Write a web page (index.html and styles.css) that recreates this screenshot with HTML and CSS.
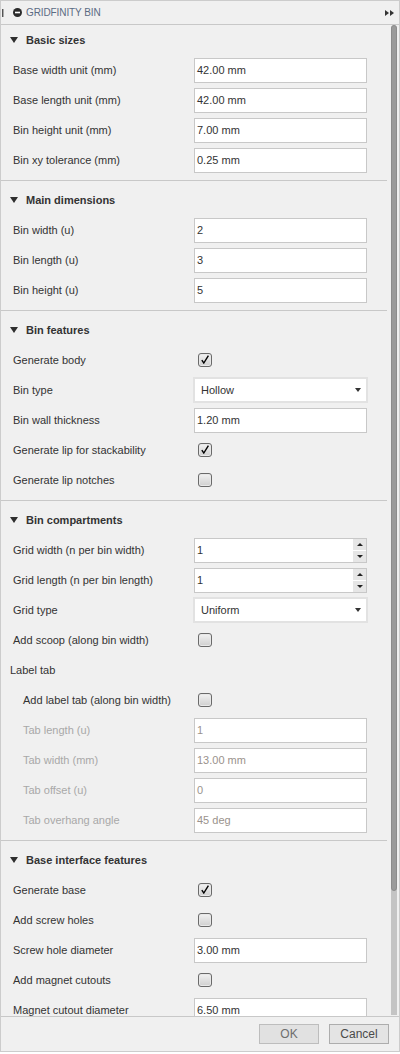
FILE: index.html
```html
<!DOCTYPE html>
<html lang="en">
<head>
<meta charset="utf-8">
<title>Gridfinity Bin</title>
<link rel="stylesheet" href="styles.css">
</head>
<body>
<div class="window">
  <div class="titlebar">
    <span class="grip"></span>
    <svg class="tb-icon" width="9" height="9" viewBox="0 0 9 9"><circle cx="4.5" cy="4.5" r="4.5" fill="#2b2b2b"/><rect x="2" y="3.7" width="5" height="1.6" fill="#fff"/></svg>
    <span class="tb-title">GRIDFINITY BIN</span>
    <svg class="tb-arrows" width="9" height="6" viewBox="0 0 9 6"><polygon points="0,0 4,3 0,6" fill="#333"/><polygon points="5,0 9,3 5,6" fill="#333"/></svg>
  </div>
  <div class="main">
    <div class="content">
      <section class="group first">
        <div class="ghead"><span class="tri"></span>Basic sizes</div>
        <div class="row"><span class="lbl">Base width unit (mm)</span><div class="field">42.00 mm</div></div>
        <div class="row"><span class="lbl">Base length unit (mm)</span><div class="field">42.00 mm</div></div>
        <div class="row"><span class="lbl">Bin height unit (mm)</span><div class="field">7.00 mm</div></div>
        <div class="row"><span class="lbl">Bin xy tolerance (mm)</span><div class="field">0.25 mm</div></div>
      </section>
      <section class="group">
        <div class="ghead"><span class="tri"></span>Main dimensions</div>
        <div class="row"><span class="lbl">Bin width (u)</span><div class="field">2</div></div>
        <div class="row"><span class="lbl">Bin length (u)</span><div class="field">3</div></div>
        <div class="row"><span class="lbl">Bin height (u)</span><div class="field">5</div></div>
      </section>
      <section class="group">
        <div class="ghead"><span class="tri"></span>Bin features</div>
        <div class="row"><span class="lbl">Generate body</span><span class="cb checked"></span></div>
        <div class="row"><span class="lbl">Bin type</span><div class="select">Hollow<span class="caret"></span></div></div>
        <div class="row"><span class="lbl">Bin wall thickness</span><div class="field">1.20 mm</div></div>
        <div class="row"><span class="lbl">Generate lip for stackability</span><span class="cb checked"></span></div>
        <div class="row"><span class="lbl">Generate lip notches</span><span class="cb"></span></div>
      </section>
      <section class="group">
        <div class="ghead"><span class="tri"></span>Bin compartments</div>
        <div class="row"><span class="lbl">Grid width (n per bin width)</span><div class="field spin"><span class="val">1</span><span class="spinbtns"><span class="up"></span><span class="down"></span></span></div></div>
        <div class="row"><span class="lbl">Grid length (n per bin length)</span><div class="field spin"><span class="val">1</span><span class="spinbtns"><span class="up"></span><span class="down"></span></span></div></div>
        <div class="row"><span class="lbl">Grid type</span><div class="select">Uniform<span class="caret"></span></div></div>
        <div class="row"><span class="lbl">Add scoop (along bin width)</span><span class="cb"></span></div>
        <div class="row sub-title"><span class="lbl">Label tab</span></div>
        <div class="row sub"><span class="lbl">Add label tab (along bin width)</span><span class="cb"></span></div>
        <div class="row sub disabled"><span class="lbl">Tab length (u)</span><div class="field">1</div></div>
        <div class="row sub disabled"><span class="lbl">Tab width (mm)</span><div class="field">13.00 mm</div></div>
        <div class="row sub disabled"><span class="lbl">Tab offset (u)</span><div class="field">0</div></div>
        <div class="row sub disabled"><span class="lbl">Tab overhang angle</span><div class="field">45 deg</div></div>
      </section>
      <section class="group">
        <div class="ghead"><span class="tri"></span>Base interface features</div>
        <div class="row"><span class="lbl">Generate base</span><span class="cb checked"></span></div>
        <div class="row"><span class="lbl">Add screw holes</span><span class="cb"></span></div>
        <div class="row"><span class="lbl">Screw hole diameter</span><div class="field">3.00 mm</div></div>
        <div class="row"><span class="lbl">Add magnet cutouts</span><span class="cb"></span></div>
        <div class="row"><span class="lbl">Magnet cutout diameter</span><div class="field">6.50 mm</div></div>
      </section>
    </div>
    <div class="scrollbar"><div class="track"><div class="thumb"></div></div></div>
  </div>
  <div class="footer">
    <button class="btn ok">OK</button>
    <button class="btn cancel">Cancel</button>
  </div>
</div>
</body>
</html>
```
FILE: styles.css
```css
* { box-sizing: border-box; }
html, body { margin: 0; padding: 0; background: #ffffff; }
body {
  font-family: "Liberation Sans", Arial, sans-serif;
  font-size: 11px;
  color: #333333;
}
.window {
  width: 400px;
  height: 1052px;
  border: 1px solid #cccccc;
  background: #f0f0f0;
  display: flex;
  flex-direction: column;
}
.titlebar {
  height: 24px;
  border-bottom: 1px solid #c8c8c8;
  display: flex;
  align-items: center;
  padding-left: 1px;
  flex: none;
}
.grip {
  width: 1px;
  height: 8px;
  background: #555;
  box-shadow: 1px 0 0 #aaa;
  margin-right: 10px;
}
.tb-icon { margin-right: 4px; }
.tb-title {
  font-size: 10px;
  color: #5b6b83;
  letter-spacing: -0.1px;
  flex: 1;
}
.tb-arrows { margin-right: 5px; }
.main {
  flex: 1;
  display: flex;
  min-height: 0;
}
.content {
  width: 386px;
  overflow: hidden;
}
.scrollbar {
  flex: 1;
  padding: 0 2px 1px 4px;
  display: flex;
}
.track {
  width: 6px;
  background: #c4c4c4;
  border-radius: 3px 3px 0 0;
  display: flex;
  flex-direction: column;
}
.thumb {
  height: 866px;
  background: #9b9b9b;
  border: 1px solid #8c8c8c;
  border-radius: 3px;
}
.group {
  padding: 4px 0 5px;
  border-bottom: 1px solid #c8c8c8;
}
.group.first { padding-top: 0; }
.ghead {
  height: 30px;
  display: flex;
  align-items: center;
  padding-left: 9px;
  font-weight: bold;
  color: #333;
}
.tri {
  width: 0;
  height: 0;
  border-left: 4px solid transparent;
  border-right: 4px solid transparent;
  border-top: 6px solid #2e2e2e;
  margin-right: 8px;
}
.row {
  height: 30px;
  display: grid;
  grid-template-columns: 181px 173px;
  align-items: center;
  padding-left: 12px;
}
.row.sub { padding-left: 22px; grid-template-columns: 171px 173px; }
.row.sub-title { padding-left: 9px; }
.lbl { color: #333; white-space: nowrap; }
.disabled .lbl { color: #a8a8a8; }
.field {
  height: 25px;
  background: #fff;
  border: 1px solid #c8c8c8;
  display: flex;
  align-items: center;
  padding-left: 2px;
  color: #333;
}
.disabled .field { color: #9a928c; }
.field.spin { padding-left: 2px; padding-right: 0; }
.field.spin .val { flex: 1; }
.spinbtns {
  width: 13px;
  height: 23px;
  display: flex;
  flex-direction: column;
  gap: 1px;
  background: #fff;
}
.spinbtns span {
  flex: 1;
  background: #e6e6e6;
  display: flex;
  align-items: center;
  justify-content: center;
}
.spinbtns .up::before {
  content: "";
  border-left: 3px solid transparent;
  border-right: 3px solid transparent;
  border-bottom: 3px solid #222;
}
.spinbtns .down::before {
  content: "";
  border-left: 3px solid transparent;
  border-right: 3px solid transparent;
  border-top: 3px solid #222;
}
.select {
  height: 26px;
  margin-left: -1px;
  margin-right: -1px;
  background: #fff;
  border: 2px solid #e2e2e2;
  display: flex;
  align-items: center;
  padding-left: 6px;
  padding-right: 5px;
  color: #333;
}
.caret {
  margin-left: auto;
  border-left: 3.5px solid transparent;
  border-right: 3.5px solid transparent;
  border-top: 4px solid #333;
}
.cb {
  width: 14px;
  height: 14px;
  margin-left: 4px;
  border: 1px solid #6a6a6a;
  border-radius: 3px;
  background: linear-gradient(#f2f2f2, #cfcfcf);
  box-shadow: inset 0 0 0 1px #e8e8e8;
  position: relative;
}
.cb.checked::after {
  content: "";
  position: absolute;
  left: 2px;
  top: 1px;
  width: 8px;
  height: 9px;
  background: no-repeat center / contain url("data:image/svg+xml;utf8,<svg xmlns='http://www.w3.org/2000/svg' viewBox='0 0 8 9'><path d='M0.8 5.2 L2.8 8 L7.4 0.6' fill='none' stroke='black' stroke-width='1.4'/></svg>");
}
.footer {
  height: 35px;
  border-top: 1px solid #c8c8c8;
  flex: none;
  display: flex;
  justify-content: flex-end;
  align-items: flex-start;
  padding: 7px 10px 0 0;
  gap: 10px;
}
.btn {
  width: 60px;
  height: 20px;
  font-family: "Liberation Sans", Arial, sans-serif;
  font-size: 12px;
  border: 1px solid #bdbdbd;
  background: #e1e1e1;
  color: #6e6e6e;
  padding: 0;
}
.btn.cancel { color: #4a4a4a; border-color: #adadad; background: #e4e4e4; }
```
